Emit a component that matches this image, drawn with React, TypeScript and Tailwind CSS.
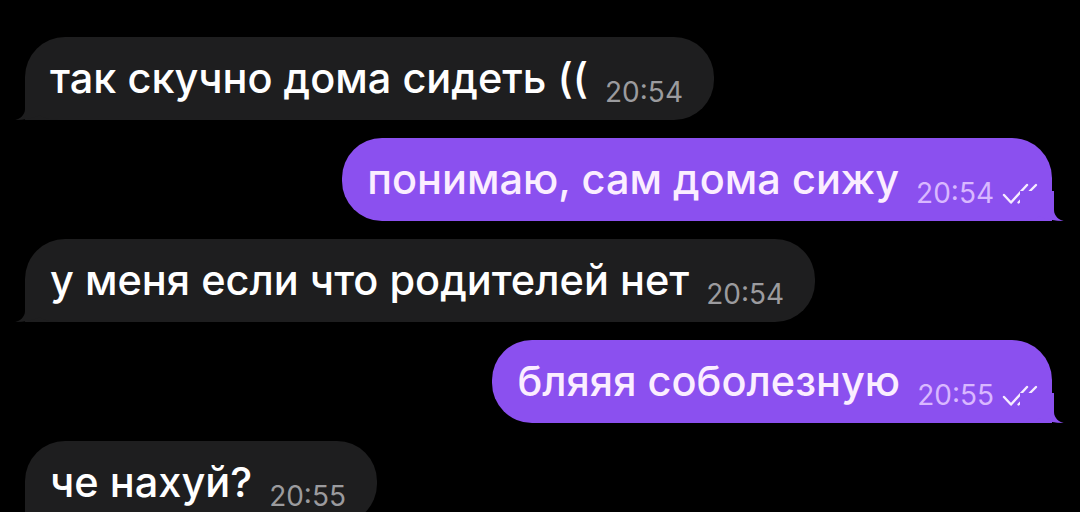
import React from "react";

type Msg = { text: string; time: string; out: boolean };

const messages: Msg[] = [
  { text: "так скучно дома сидеть ((", time: "20:54", out: false },
  { text: "понимаю, сам дома сижу", time: "20:54", out: true },
  { text: "у меня если что родителей нет", time: "20:54", out: false },
  { text: "бляяя соболезную", time: "20:55", out: true },
  { text: "че нахуй?", time: "20:55", out: false },
];

function TailIn() {
  return (
    <svg
      className="absolute bottom-0 left-[-12px]"
      width="46"
      height="30"
      viewBox="0 0 46 30"
    >
      <path
        d="M12 0 L12 19 C12 25 7 29 2 30 C11 30 20 28 27 25.5 C32 28 38 30 46 30 L46 0 Z"
        fill="#1e1e1f"
      />
    </svg>
  );
}

function TailOut() {
  return (
    <svg
      className="absolute bottom-0 right-[-14px]"
      width="46"
      height="30"
      viewBox="0 0 46 30"
    >
      <path
        d="M34 0 L34 19 C34 25 39 29 44 30 C35 30 26 28 19 25.5 C14 28 8 30 0 30 L0 0 Z"
        fill="#8b50ef"
      />
    </svg>
  );
}

function Checks() {
  return (
    <svg
      width="36"
      height="22"
      viewBox="0 0 36 22"
      className="ml-[8px] mb-[2px] shrink-0"
    >
      <path
        d="M2 12 L9 19.5 L25 2"
        fill="none"
        stroke="#f6ecff"
        strokeWidth="2.4"
        strokeLinecap="round"
        strokeLinejoin="round"
      />
      <path
        d="M16.5 19.5 L34 2"
        fill="none"
        stroke="#f6ecff"
        strokeWidth="2.4"
        strokeLinecap="round"
      />
    </svg>
  );
}

function Bubble({ m }: { m: Msg }) {
  return (
    <div
      className={
        m.out
          ? "relative self-end mr-[28px] flex items-end h-[83px] shrink-0 rounded-[40px] rounded-br-none bg-[#8b50ef] pl-[25px] pr-[14px] pb-[14px]"
          : "relative self-start ml-[25px] flex items-end h-[83px] shrink-0 rounded-[40px] rounded-bl-none bg-[#1e1e1f] pl-[25px] pr-[31px] pb-[14px]"
      }
    >
      {m.out ? <TailOut /> : <TailIn />}
      <span
        className={
          m.out
            ? "relative text-[41.5px] font-medium leading-none mb-[7px] text-[#fbeeff] whitespace-nowrap"
            : "relative text-[41.5px] font-medium leading-none mb-[7px] text-white whitespace-nowrap"
        }
      >
        {m.text}
      </span>
      <span
        className={
          m.out
            ? "relative ml-[17px] text-[28px] leading-none text-[#d9b8ff] whitespace-nowrap"
            : "relative ml-[17px] text-[28px] leading-none text-[#9b9b9e] whitespace-nowrap"
        }
      >
        {m.time}
      </span>
      {m.out && <Checks />}
    </div>
  );
}

export default function App() {
  return (
    <div
      className="w-[1080px] h-[512px] overflow-hidden bg-black flex flex-col gap-[18px] pt-[37px]"
      style={{ fontFamily: "Inter, 'Liberation Sans', Arial, sans-serif" }}
    >
      {messages.map((m, i) => (
        <Bubble key={i} m={m} />
      ))}
    </div>
  );
}
